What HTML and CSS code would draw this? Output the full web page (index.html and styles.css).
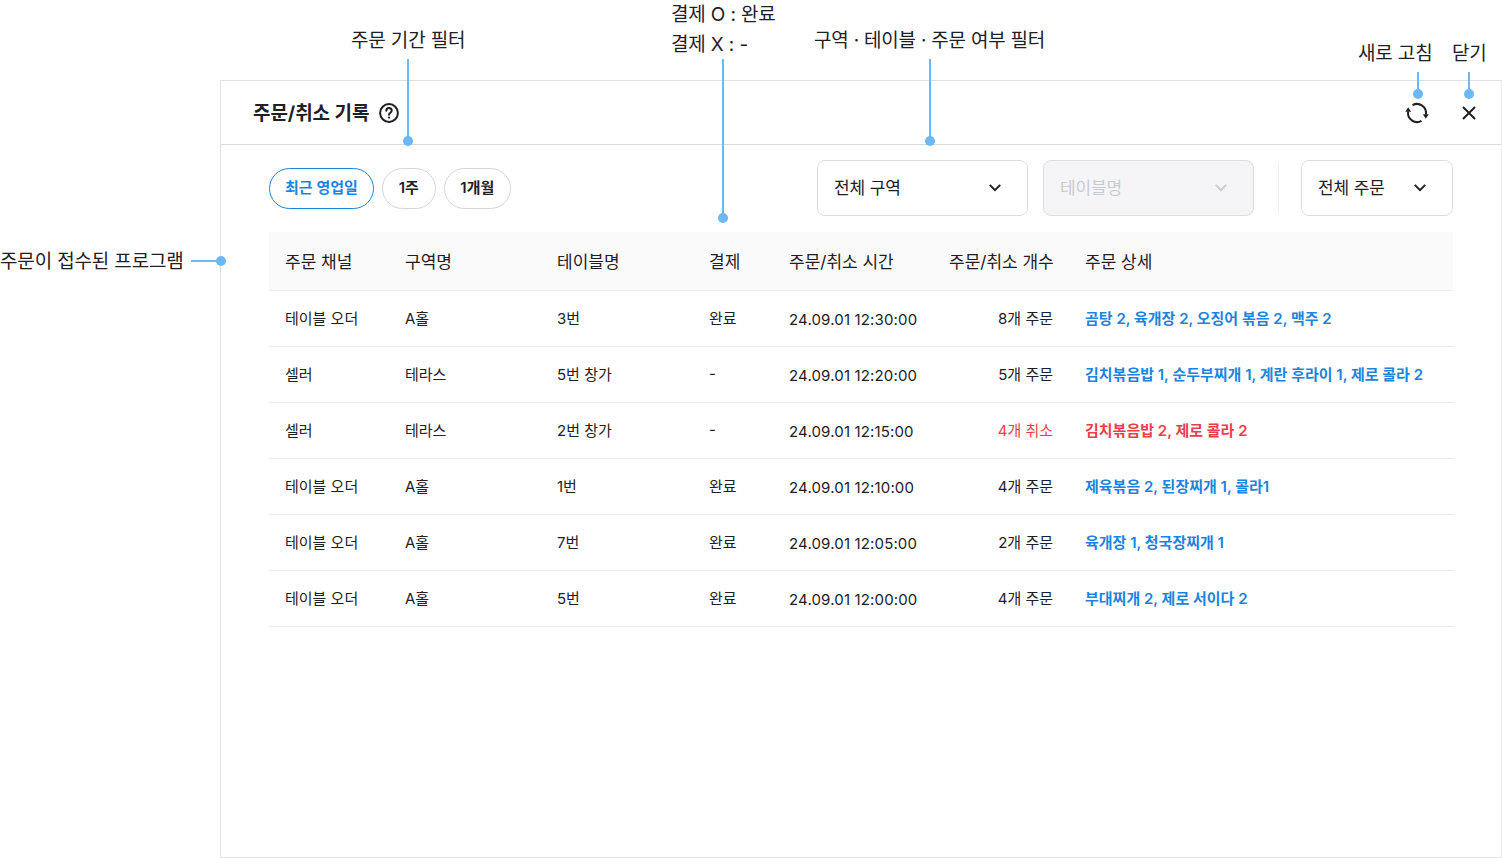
FILE: index.html
```html
<!DOCTYPE html>
<html lang="ko">
<head>
<meta charset="utf-8">
<title>주문/취소 기록</title>
<link rel="stylesheet" href="styles.css">
</head>
<body>
<div class="canvas">
  <section class="panel">
    <header class="panel-head">
      <h1 class="title">주문/취소 기록</h1>
      <svg class="help" width="22" height="22" viewBox="0 0 22 22" fill="none" stroke="#1f2024" stroke-width="2"><circle cx="11" cy="11" r="8.9"/><path d="M8.3 8.8a2.7 2.7 0 0 1 5.4 0c0 1.9-2.7 2-2.7 3.9" stroke-linecap="round"/><circle cx="11" cy="15.6" r="1.1" fill="#1f2024" stroke="none"/></svg>
      <div class="head-actions">
        <svg class="refresh" width="24" height="24" viewBox="0 0 24 24" fill="none"><path d="M7.5 4.2A9 9 0 0 1 20.87 13.5M16.5 19.8A9 9 0 0 1 3.13 10.5" stroke="#1f2024" stroke-width="2"/><path d="M17.9 13.2h5.8l-2.9 4.6zM.3 10.8h5.8L3.2 6.2z" fill="#1f2024"/></svg>
        <svg class="close" width="24" height="24" viewBox="0 0 24 24" fill="none" stroke="#1f2024" stroke-width="2"><path d="M6 6l12 12M18 6L6 18"/></svg>
      </div>
    </header>
    <div class="content">
      <div class="toolbar">
        <div class="pills">
          <button class="pill pill-on">최근 영업일</button>
          <button class="pill pill-week">1주</button>
          <button class="pill pill-month">1개월</button>
        </div>
        <div class="selects">
          <div class="select select-wide"><span>전체 구역</span><svg width="16" height="16" viewBox="0 0 16 16" fill="none" stroke="currentColor" stroke-width="2"><path d="M2.8 4.9L8 10.1l5.2-5.2"/></svg></div>
          <div class="select select-wide select-off"><span>테이블명</span><svg width="16" height="16" viewBox="0 0 16 16" fill="none" stroke="currentColor" stroke-width="2"><path d="M2.8 4.9L8 10.1l5.2-5.2"/></svg></div>
          <div class="divider"></div>
          <div class="select select-narrow"><span>전체 주문</span><svg width="16" height="16" viewBox="0 0 16 16" fill="none" stroke="currentColor" stroke-width="2"><path d="M2.8 4.9L8 10.1l5.2-5.2"/></svg></div>
        </div>
      </div>
      <table class="orders">
        <colgroup><col class="c1"><col class="c2"><col class="c3"><col class="c4"><col class="c5"><col class="c6"><col></colgroup>
        <thead>
          <tr><th>주문 채널</th><th>구역명</th><th>테이블명</th><th>결제</th><th>주문/취소 시간</th><th class="right">주문/취소 개수</th><th>주문 상세</th></tr>
        </thead>
        <tbody>
          <tr><td>테이블 오더</td><td>A홀</td><td>3번</td><td>완료</td><td class="time">24.09.01 12:30:00</td><td class="right">8개 주문</td><td class="detail">곰탕 2, 육개장 2, 오징어 볶음 2, 맥주 2</td></tr>
          <tr><td>셀러</td><td>테라스</td><td>5번 창가</td><td>-</td><td class="time">24.09.01 12:20:00</td><td class="right">5개 주문</td><td class="detail">김치볶음밥 1, 순두부찌개 1, 계란 후라이 1, 제로 콜라 2</td></tr>
          <tr><td>셀러</td><td>테라스</td><td>2번 창가</td><td>-</td><td class="time">24.09.01 12:15:00</td><td class="right cancel">4개 취소</td><td class="detail cancel">김치볶음밥 2, 제로 콜라 2</td></tr>
          <tr><td>테이블 오더</td><td>A홀</td><td>1번</td><td>완료</td><td class="time">24.09.01 12:10:00</td><td class="right">4개 주문</td><td class="detail">제육볶음 2, 된장찌개 1, 콜라1</td></tr>
          <tr><td>테이블 오더</td><td>A홀</td><td>7번</td><td>완료</td><td class="time">24.09.01 12:05:00</td><td class="right">2개 주문</td><td class="detail">육개장 1, 청국장찌개 1</td></tr>
          <tr><td>테이블 오더</td><td>A홀</td><td>5번</td><td>완료</td><td class="time">24.09.01 12:00:00</td><td class="right">4개 주문</td><td class="detail">부대찌개 2, 제로 서이다 2</td></tr>
        </tbody>
      </table>
    </div>
  </section>

  <div class="note note-period">주문 기간 필터</div>
  <div class="note note-pay">결제 O : 완료<br>결제 X : -</div>
  <div class="note note-filter">구역 · 테이블 · 주문 여부 필터</div>
  <div class="note note-refresh">새로 고침</div>
  <div class="note note-close">닫기</div>
  <div class="note note-program">주문이 접수된 프로그램</div>

  <div class="line v v-period"></div><div class="dot d-period"></div>
  <div class="line v v-pay"></div><div class="dot d-pay"></div>
  <div class="line v v-filter"></div><div class="dot d-filter"></div>
  <div class="line v v-refresh"></div><div class="dot d-refresh"></div>
  <div class="line v v-close"></div><div class="dot d-close"></div>
  <div class="line h-program"></div><div class="dot d-program"></div>
</div>
</body>
</html>
```
FILE: styles.css
```css
* { box-sizing: border-box; }
html, body { margin: 0; padding: 0; background: #fff; }
body {
  font-family: Inter, "Noto Sans CJK KR", sans-serif;
  color: #1f2024;
  overflow: hidden;
}
.canvas { position: relative; width: 1502px; height: 858px; padding: 80px 0 0 220px; }

.panel {
  width: 1282px;
  height: 778px;
  border: 1px solid #dfe0e2;
  border-right-color: #eceded;
}
.panel-head {
  height: 64px;
  border-bottom: 1px solid #d9dadc;
  display: flex;
  align-items: center;
  padding: 0 20px 0 32px;
}
.title { margin: 2px 0 0; font-size: 19px; font-weight: 700; letter-spacing: -0.05px; line-height: 24px; }
.help { margin-left: 9px; }
.head-actions { margin-left: auto; display: flex; align-items: center; gap: 28px; }

.content { padding: 15px 48px 0 48px; }
.toolbar { display: flex; justify-content: space-between; align-items: center; height: 56px; }
.pills { display: flex; gap: 8px; }
.pill {
  height: 41px;
  padding: 0 15px;
  border: 1px solid #d4d5d8;
  border-radius: 21px;
  background: #fff;
  font: 600 15px/20px Inter, "Noto Sans CJK KR", sans-serif;
  color: #1f2024;
}
.pill-week { width: 54px; padding: 0; }
.pill-month { width: 67px; padding: 0; }
.pill-on { border-color: #1b84e0; color: #1b84e0; }
.selects { display: flex; align-items: center; }
.select {
  height: 56px;
  border: 1px solid #dcdde0;
  border-radius: 8px;
  display: flex;
  align-items: center;
  justify-content: space-between;
  padding: 0 24px 0 16px;
  font-size: 17px;
  letter-spacing: -0.1px;
  color: #1f2024;
}
.select span { margin-top: -3px; }
.select-wide { width: 211px; margin-right: 15px; }
.select-wide + .select-wide { margin-right: 0; }
.select-narrow { width: 152px; padding-right: 24px; }
.select-off { background: #f5f5f7; color: #c9cbd0; }
.divider { width: 1px; height: 48px; background: #eeeff0; margin: 0 22px 0 24px; }

.orders { margin-top: 16px; width: 1184px; border-collapse: collapse; table-layout: fixed; }
.c1 { width: 120px; } .c2 { width: 152px; } .c3 { width: 152px; } .c4 { width: 80px; }
.c5 { width: 160px; } .c6 { width: 136px; }
.orders th {
  height: 58px;
  padding: 0 16px;
  background: #fafafb;
  border-bottom: 1px solid #eceded;
  font-size: 17px;
  font-weight: 400;
  text-align: left;
  white-space: nowrap;
}
.orders td {
  height: 56px;
  padding: 0 16px 1px;
  border-bottom: 1px solid #e9eaeb;
  font-size: 15px;
  white-space: nowrap;
}
.orders .time { letter-spacing: 0.15px; padding: 2px 16px 0; }
.orders .right { text-align: right; }
.orders .detail { color: #1b84e0; font-weight: 600; }
.orders .cancel { color: #ec3d4c; }

.note { position: absolute; font-size: 19px; line-height: 30px; color: #1f2024; white-space: nowrap; letter-spacing: -0.15px; }
.note-period { left: 351px; top: 26px; }
.note-pay { left: 671px; top: 0; }
.note-filter { left: 814px; top: 26px; letter-spacing: -0.22px; }
.note-refresh { left: 1358px; top: 39px; }
.note-close { left: 1452px; top: 39px; }
.note-program { left: 0; top: 247px; }

.line { position: absolute; background: #6cb8f5; }
.v { width: 2px; }
.v-period { left: 407px; top: 59px; height: 82px; }
.v-pay { left: 722px; top: 59px; height: 159px; }
.v-filter { left: 929px; top: 59px; height: 82px; }
.v-refresh { left: 1417px; top: 72px; height: 22px; }
.v-close { left: 1468px; top: 72px; height: 22px; }
.h-program { left: 191px; top: 260px; width: 30px; height: 2px; }
.dot { position: absolute; width: 10px; height: 10px; border-radius: 50%; background: #6cb8f5; }
.d-period { left: 403px; top: 136px; }
.d-pay { left: 718px; top: 213px; }
.d-filter { left: 925px; top: 136px; }
.d-refresh { left: 1413px; top: 89px; }
.d-close { left: 1464px; top: 89px; }
.d-program { left: 216px; top: 256px; }
```
